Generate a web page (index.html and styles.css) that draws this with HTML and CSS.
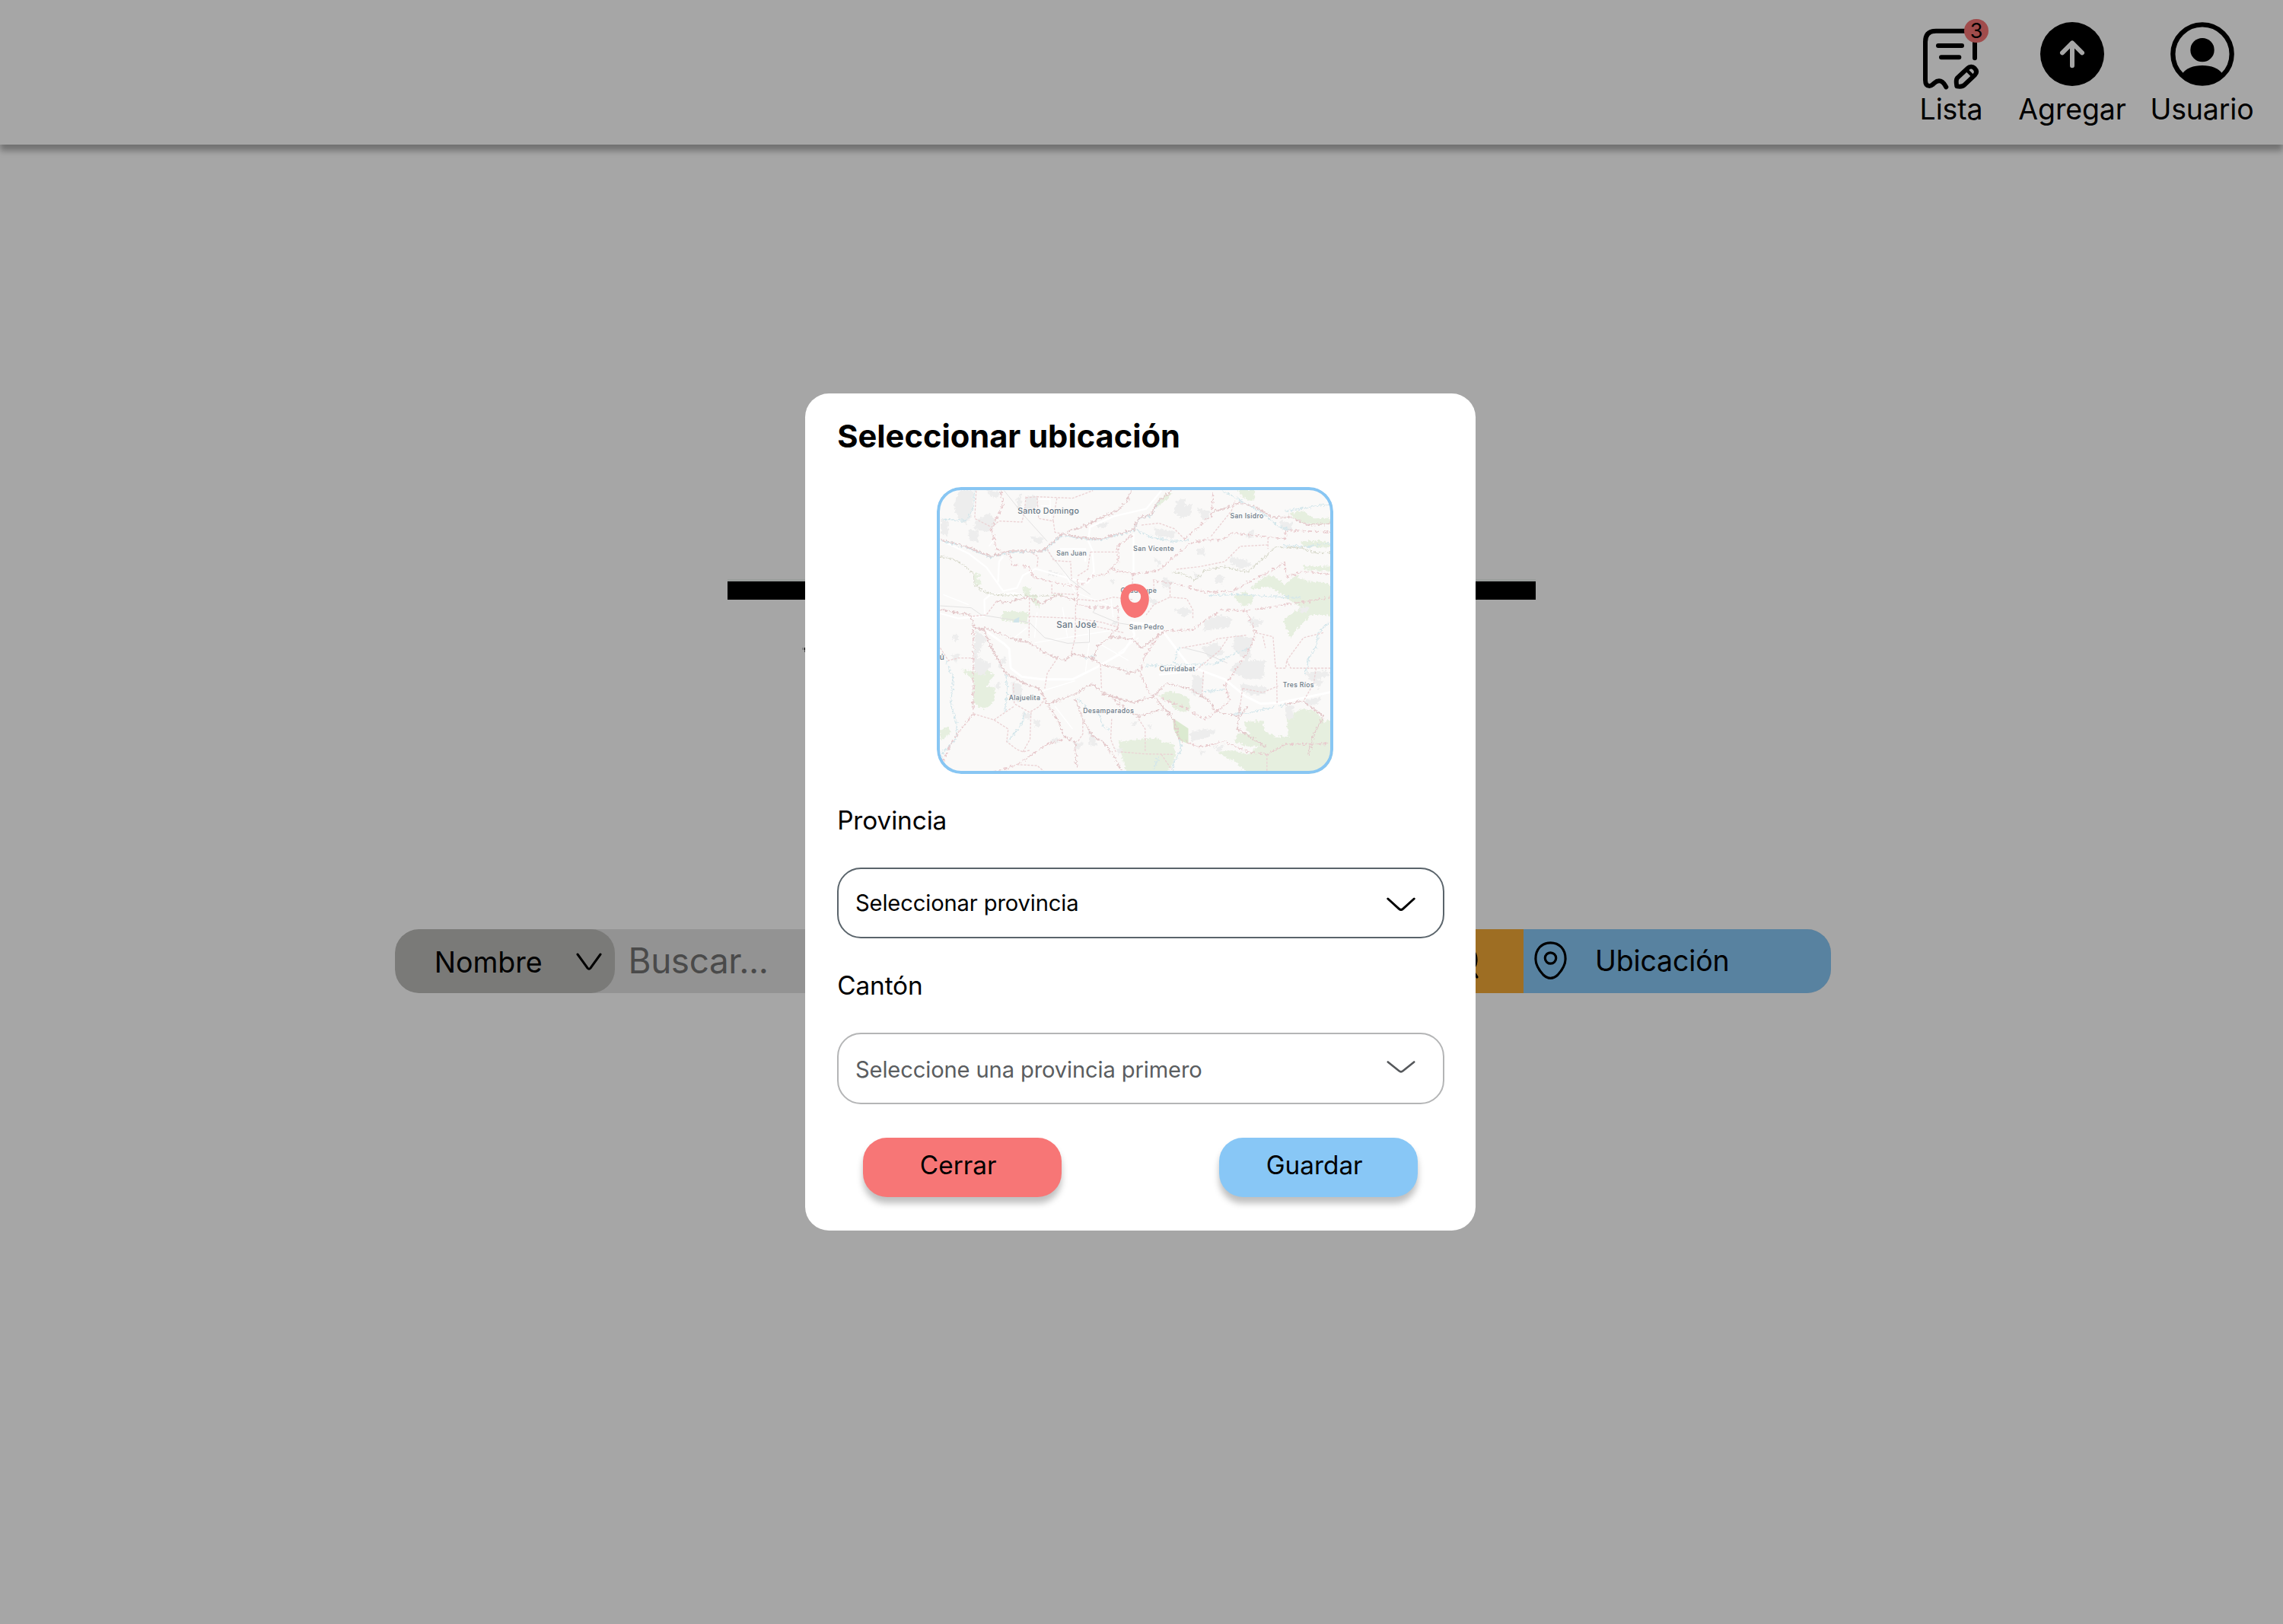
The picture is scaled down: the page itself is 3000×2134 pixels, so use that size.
FILE: index.html
```html
<!DOCTYPE html>
<html lang="es">
<head>
<meta charset="utf-8">
<title>Seleccionar ubicación</title>
<link rel="stylesheet" href="styles.css">
</head>
<body>
<div class="page">
  <header class="topbar">
    <a class="nav-item nav-lista">
      <span class="nav-icon">
        <svg class="icon" viewBox="126 86 252 252" fill="none" stroke="#000" stroke-width="18" stroke-linecap="round" stroke-linejoin="round">
          <path d="M304 121H192Q150 121 150 164V314Q150 338 166 338C182 338 184 318 204 318C220 318 226 332 232 342"/>
          <path d="M345 160V228M201 179H294M213 225H283"/>
          <path d="M276 306L317 268C326 259 337 261 344 268C353 277 354 286 345 295L304 334C298 340 286 341 274 339C272 328 272 311 276 306Z"/>
          <path d="M316 278L334 296" stroke-width="13"/>
        </svg>
        <span class="badge">3</span>
      </span>
      <span>Lista</span>
    </a>
    <a class="nav-item nav-agregar">
      <svg class="icon" viewBox="603 86 252 252">
        <circle cx="729" cy="212" r="126"/>
        <path d="M729 258V170M690 207L729 168L768 207" fill="none" stroke="#fff" stroke-width="18" stroke-linecap="round" stroke-linejoin="round"/>
      </svg>
      <span>Agregar</span>
    </a>
    <a class="nav-item nav-usuario">
      <svg class="icon" viewBox="1115 86 252 252">
        <circle cx="1241" cy="212" r="116" fill="none" stroke="#000" stroke-width="19"/>
        <circle cx="1241" cy="196" r="47"/>
        <path d="M1162 289Q1186 257 1241 257T1320 289Q1290 328 1241 328T1162 289Z"/>
      </svg>
      <span>Usuario</span>
    </a>
  </header>

  <main class="content">
    <div class="rule"></div>
    <svg class="speck" viewBox="0 0 6 6"><path d="M0 0H3V3H0Z" fill="#d0d0d0"/><path d="M3 0H5V3H3Z"/><path d="M3 3H5V6H3Z" fill="#777"/></svg>
    <div class="search">
      <div class="search-kind">
        <span>Nombre</span>
        <svg class="kind-arrow" viewBox="0 0 34 25"><path d="M2 2L15 20Q17 22.500 19 20L32 2" fill="none" stroke="#000" stroke-width="3" stroke-linecap="round"/></svg>
      </div>
      <div class="search-input">Buscar...</div>
      <div class="search-go">
        <svg class="go-icon" viewBox="0 0 48 48" fill="none" stroke="#000" stroke-width="3.200" stroke-linecap="round"><circle cx="23" cy="22" r="19"/><path d="M37 36L43 45"/></svg>
      </div>
      <div class="search-place">
        <svg class="pin-icon" viewBox="0 0 43 50" fill="none" stroke="#000" stroke-width="3.200"><path d="M21.500 1.800C10 1.800 1.900 10 1.900 23C1.900 31 6.500 38 12 44Q16.500 48.300 21.500 48.300T31 44C36.500 38 41.100 31 41.100 23C41.100 10 33 1.800 21.500 1.800Z"/><circle cx="21.500" cy="22" r="7.200"/></svg>
        <span>Ubicación</span>
      </div>
    </div>
  </main>
</div>

<div class="overlay">
  <section class="modal">
    <h1 class="title">Seleccionar ubicación</h1>
    <div class="map">
      <svg class="map-art" viewBox="4.500 6 1561.500 1132.500" preserveAspectRatio="none">
        <defs>
          <filter id="rough" x="0" y="0" width="100%" height="100%"><feTurbulence type="fractalNoise" baseFrequency="0.1" numOctaves="2" seed="4"/><feDisplacementMap in="SourceGraphic" scale="22" xChannelSelector="R" yChannelSelector="G"/></filter>
        </defs>
        <rect x="0" y="0" width="1568" height="1143" fill="#faf9f8"/>
        <g fill="#e6efdf" filter="url(#rough)">
          <path d="M265 494L368 498L363 543L260 532Z"/>
          <path d="M344 398L376 404L372 428L408 436L396 452L414 475L408 484L388 466L378 440L350 436Z"/>
          <path d="M102 724L146 734L196 722L232 750L200 792L236 798L232 838L222 866L186 880L150 862L150 770Z"/>
          <path d="M722 1010L880 994L888 1010L940 1020L948 1060L930 1110L900 1143H760L738 1080Z"/>
          <path d="M1214 934L1290 926L1296 970L1336 990L1390 990L1384 920L1440 880L1500 890L1532 930L1568 925V1143H1240L1180 1090L1110 1050L1170 1044L1230 1060L1276 1026L1240 1030L1180 1010L1190 975L1240 980L1226 960Z"/>
          <path d="M1238 410L1290 360L1330 355L1376 390L1420 356L1470 380L1520 380L1566 395V520L1540 510L1480 510L1440 550L1400 600L1380 560L1370 530L1440 480L1380 440L1320 400Z"/>
          <path d="M1390 110L1450 100L1490 130L1550 128L1566 150L1500 156L1440 144Z"/>
          <path d="M1440 220L1520 218L1566 232V246L1450 240Z"/>
          <path d="M1450 316L1566 320V338L1500 334L1450 330Z"/>
          <path d="M1175 440L1216 418L1252 436L1246 466L1210 474Z"/>
          <path d="M1185 18H1256V56L1230 60Z"/>
          <path d="M876 830L930 810L1000 840L1006 880L980 894L940 880L920 850Z"/>
          <path d="M146 345L180 350L166 370L185 384L160 395Z"/>
          <path d="M18 966L52 950L62 974L30 1000L18 1002Z"/>
          <path d="M880 54L930 20L918 50L872 84Z"/>
        </g>
        <path d="M936 918L996 958V1018L960 1004L938 960Z" fill="#dbead0"/>
        <g fill="#ededed" filter="url(#rough)">
          <path d="M94 20H150L142 120L120 150L90 130L70 80Z"/>
          <path d="M154 140L214 108L242 150L210 184L152 172Z"/>
          <path d="M356 44L400 38V106L350 104Z"/>
          <path d="M20 130L52 142L48 200L20 190ZM128 178L170 174L166 224L132 216ZM372 200L430 206L412 232L384 220ZM634 156L680 142V160L640 168Z"/>
          <path d="M158 570L202 600L178 644L150 700ZM156 672L190 690L220 704L190 748L152 738Z"/>
          <path d="M1180 590L1250 600L1236 690L1300 690L1290 760L1230 766L1160 730L1180 700L1220 690L1170 640Z"/>
          <path d="M1356 140L1406 146L1404 176L1362 172ZM1048 640L1110 618L1136 660L1080 684ZM1014 744L1054 756L1050 832L1010 822Z"/>
          <path d="M1200 782L1308 796L1302 824L1250 826L1206 808ZM1456 740L1540 728L1554 750L1480 770ZM1376 872L1410 866V920L1384 922ZM1450 850L1520 832L1510 860L1460 866Z"/>
          <path d="M1000 974L1060 960L1106 966L1080 990L1008 1010ZM1060 530L1130 510L1172 530L1150 560L1056 572Z"/>
          <path d="M950 60L984 50L980 80L1010 74L1004 120L970 130L940 104ZM1030 90L1080 100L1074 140L1050 130ZM860 168L946 180L940 208L870 200ZM1236 180L1256 174L1250 206L1220 204Z"/>
          <path d="M1166 280L1226 296L1250 312L1200 330L1160 304ZM1010 340L1050 356L1030 370ZM1030 250L1060 246V276L1032 270ZM1110 350L1140 360L1130 390L1100 380Z"/>
          <path d="M900 360L936 380L920 410L890 392ZM940 490L980 480L1010 496L980 520ZM1240 520L1296 536L1260 560L1230 544ZM1480 760L1530 770L1510 800Z"/>
          <path d="M300 770L340 790L340 850L302 850ZM386 920L412 924V950L390 950ZM340 896L376 900L370 920L344 914ZM602 960L624 990L636 1030L606 1020ZM536 1010L590 1014L560 1040ZM455 1000L486 994V1014L452 1016Z"/>
          <path d="M200 18L260 24L240 50L214 40ZM710 1034L740 1040L720 1066ZM846 440L874 452L868 470L840 462ZM446 338L500 350L480 358L446 350ZM1440 480L1470 478L1464 502L1436 500Z"/>
          <path d="M320 50L336 30L340 80L325 90ZM740 730L755 724L752 744ZM690 370L704 368V390L692 388ZM862 284L890 300L880 320ZM66 590L84 580L90 610L74 620ZM60 670L96 660L80 700ZM244 710L272 670L278 690L256 726ZM230 790L256 772L250 806Z"/>
          <path d="M1096 1032L1140 1020L1120 1050ZM836 950L850 940L852 966ZM1040 1042L1066 1050L1046 1062ZM770 940L800 928L786 950ZM690 540L716 534L712 552Z"/>
        </g>
        <g fill="none" stroke="#fff" stroke-width="7" stroke-linejoin="round">
          <path d="M18 214L130 268L200 322L266 416L320 404L344 354L394 328L520 364L600 384"/>
          <path d="M600 384L624 340L618 256L602 220L608 164L700 122L830 92L890 20"/>
          <path d="M18 504L90 524L194 514L192 450L216 430L312 424L366 444"/>
          <path d="M194 570L270 624L290 644L296 720L340 754L420 764L540 764L640 714L740 656L784 590L770 540L860 548L900 580L1000 712L1060 734L1140 764L1220 830L1280 860L1360 856L1568 812" stroke-width="9"/>
          <path d="M880 746L940 740L1000 732M266 280L250 300L246 380M780 190V356M490 250H590V300"/>
          <path d="M500 480L520 600M600 540L605 620L590 740M400 500L390 600M690 440L700 520M420 810L550 770" stroke-width="4"/>
          <path d="M404 54H452V130M414 80H450M390 620L700 570M310 600L360 560M640 620L760 690M720 660L800 600M500 330L550 420L700 480M30 430L130 470M470 870L540 960M210 240L240 200" stroke-width="4"/>
        </g>
        <g fill="none" stroke="#e2e1e1" stroke-width="3">
          <path d="M270 20L350 120L440 220M440 256L530 370L610 430M18 474L140 482L180 510L370 540L430 600L520 622L606 618V560M640 470L620 500L720 542L900 570M1140 1000M980 640L1060 660L1150 700"/>
        </g>
        <g fill="none" stroke="#d3e6eb" stroke-width="4" filter="url(#rough)">
          <path d="M154 20L150 80L120 140L30 132"/>
          <path d="M18 216L120 244L220 284L290 262L420 262L500 196L560 208L650 214L780 178L800 130L850 120L880 64"/>
          <path d="M790 174L850 204L940 220L1000 214"/>
          <path d="M1130 20L1220 70L1290 110L1350 160L1400 176M1380 100L1440 90L1568 70"/>
          <path d="M1370 236L1460 240L1568 226M1080 434L1200 430L1290 436L1440 442"/>
          <path d="M40 690L70 760L60 860L84 940L80 1000L30 1050L20 1080"/>
          <path d="M276 740L284 800L272 890M350 894L340 940L284 1010M560 840L600 880L650 910L660 950L686 966"/>
          <path d="M824 712L900 708L1000 706L1100 704L1180 660L1240 640"/>
          <path d="M940 700L960 640M1060 812L1140 806M1460 740L1470 680L1500 640L1508 580L1550 540M1160 902L1240 896L1300 880L1400 860"/>
          <path d="M960 1000L968 1040L940 1090L930 1143M586 680L630 672M880 1064L860 1120"/>
        </g>
        <path d="M310 528L330 518L328 540L306 540Z" fill="#d0e4ea"/>
        <g fill="none" stroke="#d9dacd" stroke-width="4" filter="url(#rough)">
          <path d="M18 280L70 290L120 320L150 350L152 390L190 420L240 430L340 434L420 436L500 430"/>
          <path d="M930 340L980 350L1020 374L1060 336L1130 320L1230 340L1300 280L1340 240L1440 246L1500 266L1568 264"/>
        </g>
        <g fill="none" stroke="#e3c8ca" stroke-width="4.500" filter="url(#rough)">
          <path d="M18 212L120 240L220 280L290 258L420 258L500 190L560 204L650 210L780 174L800 128L850 114L880 60L930 20"/>
          <path d="M18 488L140 512L150 560L190 570L220 640L276 740L370 790L410 800L440 862L500 840L556 820L580 800L620 784L660 820L710 836L780 856L860 830L940 926L960 1000" stroke-width="5"/>
          <path d="M150 560L210 566L290 600L370 620L430 660L480 680L510 690L540 664L620 680L650 706L720 720L760 738L806 728"/>
          <path d="M240 456L290 460L360 440L420 466L480 430L550 450M520 180L580 164L640 132L720 96L752 66L770 20"/>
          <path d="M620 690L640 630L690 596L780 606L812 640L880 590L900 574"/>
          <path d="M440 862L480 920L506 990L550 1010L556 1110M550 840L580 920L620 990L660 1010L700 1060L730 1120M700 840L760 890L800 910L900 880L930 900"/>
          <path d="M860 830L910 780L1000 800L1080 850L1100 890L1200 910L1230 870M1200 870L1190 960L1300 1030"/>
          <path d="M1380 862L1450 850L1530 910L1490 980L1470 1060"/>
          <path d="M1090 104L1140 90L1200 68L1260 84L1330 126L1400 124L1470 156L1568 150"/>
        </g>
        <g fill="none" stroke="#e8cacd" stroke-width="5" stroke-dasharray="20 7" filter="url(#rough)">
          <path d="M256 20L268 70L220 170L240 250L290 270L300 310L370 320L384 360L460 380L560 400L620 356L670 350L720 300L716 240L780 190"/>
          <path d="M690 330L780 350L880 334L930 290L1000 230L1060 214L1130 214L1170 188L1260 196L1380 210L1380 176L1568 184"/>
          <path d="M860 374L900 380L960 390L1060 420L1170 416L1250 374L1376 306L1384 360L1450 340L1568 350"/>
          <path d="M900 574L1010 570L1080 520L1130 490L1224 494L1568 440"/>
          <path d="M1224 494L1262 580L1240 640L1140 790L1160 850L1060 924L990 880L880 836"/>
          <path d="M148 570V900L70 1000L20 1100M216 1138L320 1100L440 1020L504 1000"/>
          <path d="M560 370L556 470L620 480L720 480L720 560L680 600M880 590L820 680L806 740L850 830"/>
          <path d="M960 1000L1040 1030L1140 1010L1230 1050L1306 1060L1380 1020L1568 1018M980 210L1086 120L1094 20"/>
        </g>
        <g fill="none" stroke="#ebd2d4" stroke-width="4" stroke-dasharray="9 5">
          <path d="M160 20L154 130L220 164L250 140L340 144L350 104L356 44M370 260L404 280L400 320M356 48L400 44L540 50L620 20"/>
          <path d="M400 48L406 130L464 140L470 184L520 196M478 50L462 140M440 250L466 296L532 300L536 370M610 262H716M560 356L600 330L610 262"/>
          <path d="M458 390V424L550 430M370 444L368 600M368 516L560 524L660 540L720 560M552 470L550 600L534 664M240 456L200 510L140 516"/>
          <path d="M560 448L640 456L700 440L780 450M776 350V390M860 374L860 410M924 400V440L860 470L830 510M924 440L990 446L1014 490L1014 526"/>
          <path d="M812 156L880 148L940 170L980 210M1086 200L1166 100L1180 60M950 330L1040 320L1140 300L1200 240L1310 234M1310 204V250"/>
          <path d="M970 640L1080 620L1110 604L1224 590M1150 604L1120 650L1024 730M1056 734L1050 830M1262 580L1330 596L1340 720L1380 720L1384 690L1450 600L1530 580"/>
          <path d="M1384 690L1400 720H1560M1344 736L1346 860M1210 800L1200 870M1210 800L1290 816L1350 790M1500 720L1490 780L1450 850"/>
          <path d="M480 680L440 740L430 800M650 706L654 800M306 780L310 860L370 894L410 870L430 840M376 894L372 1000L344 1050M150 900L230 924L286 960L280 1010L320 1040L344 1050L370 1044"/>
          <path d="M230 924L280 890L310 870M580 920V980L560 1010M694 920L690 1000L710 1050M800 920L826 960V1050M730 1050L826 1058L940 1060M890 1060L930 1120M18 640L50 690L90 680L148 680"/>
          <path d="M320 1100L400 1104L440 1138M1306 1060V1138M1290 594L1300 640M740 580L560 540"/>
        </g>
        <g class="map-label">
          <text x="323" y="111" font-size="32" textLength="242">Santo Domingo</text>
          <text x="1161" y="130" font-size="26" textLength="131">San Isidro</text>
          <text x="476" y="276" font-size="26" textLength="119">San Juan</text>
          <text x="779" y="257" font-size="26" textLength="160">San Vicente</text>
          <text x="729" y="423" font-size="26" textLength="142">Guadalupe</text>
          <text x="476" y="561" font-size="35" textLength="158">San José</text>
          <text x="763" y="568" font-size="26" textLength="136">San Pedro</text>
          <text x="882" y="733" font-size="26" textLength="140">Curridabat</text>
          <text x="1369" y="795" font-size="26" textLength="122">Tres Ríos</text>
          <text x="289" y="846" font-size="26" textLength="123">Alajuelita</text>
          <text x="581" y="897" font-size="26" textLength="200">Desamparados</text>
          <text x="16" y="686" font-size="30">ú</text>
        </g>
        <path d="M785 387C750 387 729 413 729 447C729 476 744 500 761 514Q773 522 785 522T809 514C826 500 841 476 841 447C841 413 820 387 785 387ZM785 414A24 24 0 1 1 785 462A24 24 0 1 1 785 414Z" fill="#f77676" fill-rule="evenodd"/>
      </svg>
    </div>
    <label class="label label-prov">Provincia</label>
    <div class="select select-prov">
      <span>Seleccionar provincia</span>
      <svg class="chevron" viewBox="0 0 38 19"><path d="M1.800 2L16.500 15.300Q19 17.500 21.500 15.300L36.200 2" fill="none" stroke="#000" stroke-width="3" stroke-linecap="round"/></svg>
    </div>
    <label class="label label-cant">Cantón</label>
    <div class="select select-cant">
      <span>Seleccione una provincia primero</span>
      <svg class="chevron" viewBox="0 0 38 19"><path d="M1.800 2.500L16.500 14.300Q19 16.300 21.500 14.300L36.200 2.500" fill="none" stroke="#55585b" stroke-width="2.600" stroke-linecap="round"/></svg>
    </div>
    <div class="actions">
      <button class="btn btn-close">Cerrar</button>
      <button class="btn btn-save">Guardar</button>
    </div>
  </section>
</div>
</body>
</html>
```
FILE: styles.css
```css
* { box-sizing: border-box; }
body {
  margin: 0;
  background: #fff;
  color: #000;
  font-family: Inter, "Liberation Sans", sans-serif;
}
.page { height: 2134px; overflow: hidden; }

.topbar {
  display: flex;
  justify-content: flex-end;
  height: 190px;
  padding: 28.7px 38.5px 0 0;
  background: #fff;
  box-shadow: 0 8px 8px rgba(0, 0, 0, 0.32);
}
.nav-item {
  display: flex;
  flex-direction: column;
  align-items: center;
  gap: 11px;
  font-size: 37.5px;
  line-height: 40px;
  letter-spacing: -0.15px;
  white-space: nowrap;
}
.nav-lista { width: 84px; margin-right: 46px; }
.nav-agregar { width: 142px; margin-right: 31.5px; }
.nav-usuario { width: 136px; }
.icon { display: block; width: 84px; height: 84px; overflow: visible; }
.nav-icon { position: relative; }
.badge {
  position: absolute;
  left: 59.2px;
  top: -4px;
  width: 31.7px;
  height: 31.7px;
  border-radius: 50%;
  background: #f67676;
  font-size: 27.08px;
  line-height: 32px;
  text-align: center;
}

.content { display: flex; flex-direction: column; }
.rule {
  width: 1062px;
  height: 27px;
  margin: 571px 0 0 956px;
  border-top: 3px solid #eef3f0;
  background: #000;
}
.speck {
  display: block;
  width: 6px;
  height: 6px;
  margin: 63px 0 0 1054px;
}
.search {
  display: flex;
  width: 1887.3px;
  height: 83.5px;
  margin: 364px 0 0 518.7px;
  border-radius: 31.25px;
  background: #e2e2e2;
  overflow: hidden;
}
.search-kind {
  display: flex;
  align-items: center;
  justify-content: space-between;
  width: 289.4px;
  padding: 4px 17px 0 52px;
  border-radius: 31.25px;
  background: #bcbcb9;
  font-size: 37.5px;
}
.kind-arrow { width: 34px; height: 25px; margin-top: -1px; }
.search-input {
  flex: 1;
  padding-left: 17.5px;
  color: #727272;
  font-size: 45.83px;
  line-height: 84px;
  letter-spacing: -0.4px;
}
.search-go {
  display: flex;
  align-items: center;
  width: 104px;
  background: #f3a937;
}
.go-icon { width: 48px; height: 48px; }
.search-place {
  display: flex;
  align-items: center;
  gap: 37px;
  width: 404px;
  padding-left: 14px;
  background: #87c8f6;
  font-size: 37.5px;
  line-height: 86px;
  letter-spacing: -0.15px;
}
.pin-icon { width: 43px; height: 50px; margin-top: -2px; }

.overlay {
  position: absolute;
  inset: 0;
  display: flex;
  align-items: flex-start;
  padding: 516.7px 0 0 1058.3px;
  background: rgba(0, 0, 0, 0.35);
}
.modal {
  display: flex;
  flex-direction: column;
  width: 881px;
  height: 1100.5px;
  padding: 31.3px 41.9px 0;
  border-radius: 31.25px;
  background: #fff;
}
.title {
  margin: 0 0 42px;
  font-size: 41.67px;
  line-height: 50px;
  font-weight: 700;
}
.map {
  width: 520.5px;
  height: 377.5px;
  margin-left: 131.3px;
  border-radius: 32px;
  overflow: hidden;
  position: relative;
}
.map::after {
  content: "";
  position: absolute;
  inset: 0;
  border: 4.17px solid #88c6f3;
  border-radius: 32px;
}
.map-art { display: block; width: 100%; height: 100%; }
.map-label {
  font-family: Inter, "Liberation Sans", sans-serif;
  font-weight: 500;
  fill: #677785;
  stroke: #faf9f8;
  stroke-width: 5px;
  paint-order: stroke;
}
.label { font-size: 33.33px; line-height: 40px; letter-spacing: -0.1px; }
.label-prov { margin: 40.4px 0 42.3px; }
.label-cant { margin: 41.1px 0 42.7px; }
.select {
  display: flex;
  align-items: center;
  justify-content: space-between;
  width: 797.5px;
  height: 93.3px;
  padding: 0 36px 0 21.8px;
  border: 2.08px solid #5a646b;
  border-radius: 31.25px;
  font-size: 29.17px;
  letter-spacing: -0.14px;
}
.select-cant { border-color: #b4b5b6; color: #5a5d60; }
.select-cant span { padding-top: 3px; }
.select-cant .chevron { margin-top: -3px; }
.chevron { width: 38px; height: 19px; margin-top: 3px; }
.actions { display: flex; gap: 207px; margin: 44.2px 0 0 34px; }
.btn {
  width: 261px;
  height: 78.7px;
  padding: 0 11px 6.8px 0;
  border: 0;
  border-radius: 31.25px;
  color: #000;
  font: inherit;
  font-size: 33.33px;
  box-shadow: 0 8.33px 8.33px rgba(0, 0, 0, 0.25);
}
.btn-close { background: #f77676; }
.btn-save { background: #88c7f6; }
```
